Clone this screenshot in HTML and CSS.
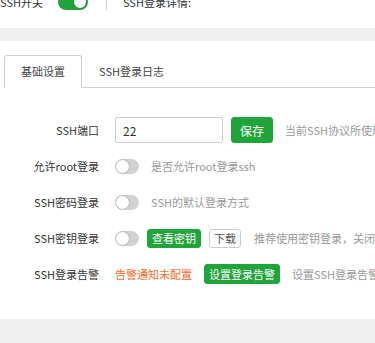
FILE: index.html
```html
<!DOCTYPE html>
<html lang="zh-CN">
<head>
<meta charset="UTF-8">
<title>SSH管理</title>
<link rel="stylesheet" href="styles.css">
</head>
<body>
    <div class="top-bar">
        <div class="top-row">
            <span class="top-label">SSH开关</span>
            <span class="switch switch-on"><span class="knob"></span></span>
            <span class="divider"></span>
            <span class="top-label">SSH登录详情:</span>
        </div>
    </div>

    <div class="panel">
        <div class="tabs">
            <div class="tab active">基础设置</div>
            <div class="tab">SSH登录日志</div>
        </div>

        <div class="tab-body">
            <div class="row">
                <div class="label">SSH端口</div>
                <input class="port-input" type="text" value="22">
                <button class="btn btn-save">保存</button>
                <span class="desc">当前SSH协议所使用的端口，默认为22</span>
            </div>
            <div class="row">
                <div class="label">允许root登录</div>
                <span class="switch"><span class="knob"></span></span>
                <span class="desc">是否允许root登录ssh</span>
            </div>
            <div class="row">
                <div class="label">SSH密码登录</div>
                <span class="switch"><span class="knob"></span></span>
                <span class="desc">SSH的默认登录方式</span>
            </div>
            <div class="row">
                <div class="label">SSH密钥登录</div>
                <span class="switch"><span class="knob"></span></span>
                <button class="btn btn-green">查看密钥</button>
                <button class="btn btn-plain">下载</button>
                <span class="desc desc-gap">推荐使用密钥登录，关闭密码登录，安全性更高</span>
            </div>
            <div class="row">
                <div class="label">SSH登录告警</div>
                <span class="warn">告警通知未配置</span>
                <button class="btn btn-green btn-alarm">设置登录告警</button>
                <span class="desc">设置SSH登录告警通知</span>
            </div>
        </div>
    </div>
</body>
</html>
```

FILE: styles.css
```css
html, body {
    overflow: hidden;
}

body {
    margin: 0;
    padding: 0;
    background-color: #f0f0f0;
    font-family: "Noto Sans CJK SC", "Microsoft YaHei", sans-serif;
    font-size: 11px;
    color: #333;
    height: 343px;
}

.top-bar {
    background-color: #fff;
    height: 28px;
    overflow: hidden;
}

.top-row {
    display: flex;
    align-items: center;
    height: 16px;
    margin-top: -6px;
    white-space: nowrap;
}

.top-label {
    color: #333;
}

.top-row .switch-on {
    margin-left: 15px;
}

.divider {
    width: 1px;
    height: 16px;
    background-color: #ccc;
    margin-left: 18px;
    margin-right: 16px;
}

.panel {
    background-color: #fff;
    margin-top: 13px;
    height: 278px;
    box-sizing: border-box;
    padding-top: 14px;
}

.tabs {
    display: flex;
    margin-left: 4px;
    border-bottom: 1px solid #cfcfda;
}

.tab {
    height: 31px;
    line-height: 31px;
    padding: 0 16px;
    color: #444;
    white-space: nowrap;
    border: 1px solid transparent;
    border-bottom: none;
    margin-bottom: -1px;
}

.tab.active {
    border-color: #cfcfda;
    border-radius: 3px 3px 0 0;
    background-color: #fff;
    height: 32px;
}

.tab-body {
    padding-top: 29px;
    padding-left: 4px;
}

.row {
    display: flex;
    align-items: center;
    height: 26px;
    margin-bottom: 10px;
    white-space: nowrap;
}

.label {
    width: 95px;
    flex-shrink: 0;
    text-align: right;
    margin-right: 16px;
    color: #333;
}

.port-input {
    width: 108px;
    height: 26px;
    box-sizing: border-box;
    border: 1px solid #ccc;
    border-radius: 2px;
    padding: 0 7px;
    font-family: inherit;
    font-size: 12px;
    color: #333;
    outline: none;
}

.btn {
    font-family: inherit;
    font-size: 11px;
    border-radius: 3px;
    cursor: pointer;
    flex-shrink: 0;
}

.btn-save {
    margin-left: 8px;
    height: 26px;
    width: 42px;
    padding: 0;
    background-color: #20a53a;
    border: 1px solid #20a53a;
    color: #fff;
    font-size: 12px;
}

.btn-green {
    height: 19px;
    line-height: 17px;
    padding: 0 4px;
    background-color: #20a53a;
    border: 1px solid #20a53a;
    color: #fff;
    margin-left: 8px;
}

.btn-plain {
    height: 19px;
    line-height: 17px;
    padding: 0 4px;
    background-color: #fff;
    border: 1px solid #ccc;
    color: #555;
    margin-left: 8px;
}

.btn-alarm {
    height: 20px;
    margin-left: 12px;
}

.desc {
    color: #999;
    margin-left: 12px;
    flex-shrink: 0;
}

.desc-gap {
    margin-left: 13px;
}

.warn {
    color: #fc6a26;
}

.switch {
    position: relative;
    display: inline-block;
    flex-shrink: 0;
    width: 24px;
    height: 15px;
    border-radius: 8px;
    background-color: #d2d2d2;
}

.switch .knob {
    position: absolute;
    top: 1px;
    left: 1px;
    width: 13px;
    height: 13px;
    border-radius: 50%;
    background-color: #fff;
    box-shadow: 0 0 2px rgba(0, 0, 0, 0.3);
}

.switch-on {
    width: 30px;
    height: 16px;
    background-color: #20a53a;
}

.switch-on .knob {
    left: auto;
    right: 2px;
    top: 2px;
    width: 12px;
    height: 12px;
}
```
